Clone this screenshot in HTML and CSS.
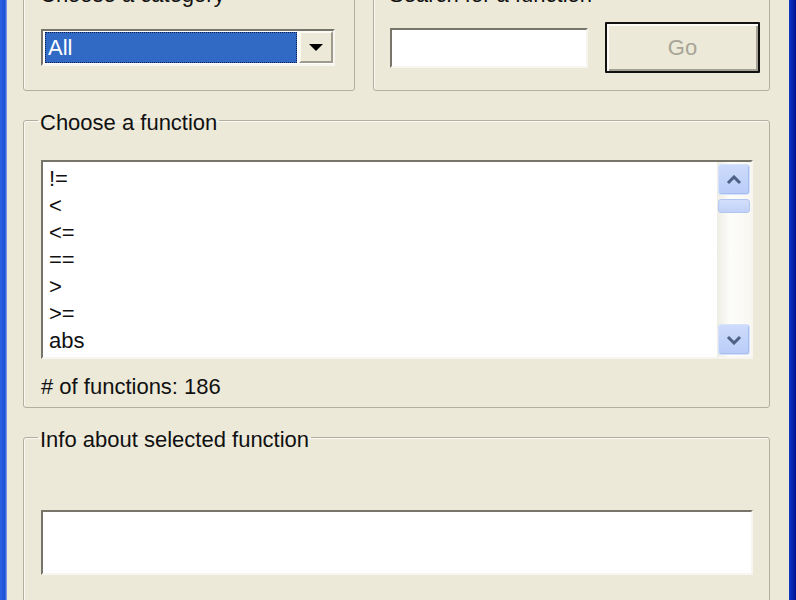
FILE: index.html
```html
<!DOCTYPE html>
<html lang="en">
<head>
    <meta charset="UTF-8">
    <title>Function Browser</title>
    <link rel="stylesheet" href="styles.css">
</head>
<body>
    <div class="window">
        <div class="frame frame-left"></div>
        <div class="client">
            <div class="top-row">
                <fieldset class="group group-category">
                    <legend>Choose a category</legend>
                    <div class="group-row">
                        <div class="combo">
                            <span class="combo-value">All</span>
                            <span class="combo-btn"><span class="tri"></span></span>
                        </div>
                    </div>
                </fieldset>
                <fieldset class="group group-search">
                    <legend>Search for a function</legend>
                    <div class="group-row">
                        <div class="textbox"></div>
                        <button class="btn" disabled>Go</button>
                    </div>
                </fieldset>
            </div>

            <fieldset class="group group-functions">
                <legend>Choose a function</legend>
                <div class="listbox">
                    <ul class="list-items">
                        <li>!=</li>
                        <li>&lt;</li>
                        <li>&lt;=</li>
                        <li>==</li>
                        <li>&gt;</li>
                        <li>&gt;=</li>
                        <li>abs</li>
                    </ul>
                    <div class="scrollbar">
                        <div class="sb-btn">
                            <svg width="16" height="10" viewBox="0 0 16 10"><polyline points="2,8 8,2 14,8" fill="none" stroke="#4d6185" stroke-width="3"/></svg>
                        </div>
                        <div class="sb-thumb"></div>
                        <div class="sb-track"></div>
                        <div class="sb-btn">
                            <svg width="16" height="10" viewBox="0 0 16 10"><polyline points="2,2 8,8 14,2" fill="none" stroke="#4d6185" stroke-width="3"/></svg>
                        </div>
                    </div>
                </div>
                <div class="count"># of functions: 186</div>
            </fieldset>

            <fieldset class="group group-info">
                <legend>Info about selected function</legend>
                <div class="infobox"></div>
            </fieldset>
        </div>
        <div class="frame frame-right"></div>
    </div>
</body>
</html>
```

FILE: styles.css
```css
body {
    margin: 0;
    background-color: #ece9d8;
    font-family: "Liberation Sans", Arial, sans-serif;
    font-size: 22px;
    color: #111;
    overflow: hidden;
}

.window {
    display: flex;
    height: 600px;
}

.frame {
    width: 7px;
    flex-shrink: 0;
}

.frame-left {
    background: linear-gradient(to right, #2b62e2, #1c4fd6 70%, #8fa9e6);
}

.frame-right {
    background: linear-gradient(to right, #1237c8, #0620a8 60%, #001490);
}

.client {
    flex: 1;
    padding: 0 19px 0 16px;
}

/* group boxes */
.group {
    margin: 0;
    border: 1px solid #b2af9f;
    border-radius: 3px;
    box-shadow: inset 1px 1px 0 #f9f8f2;
    padding: 0 16px 0 17px;
    min-width: 0;
}

.group legend {
    font-size: 22px;
    line-height: 24px;
    padding: 6px 2px 0 2px;
    margin-left: -3px;
}

.top-row {
    display: flex;
    gap: 18px;
    margin-top: -23px;
}

.group-category {
    width: 332px;
    box-sizing: border-box;
    padding: 0 19px 0 17px;
}

.group-search {
    flex: 1;
    padding: 0 9px 0 16px;
}

.group-row {
    display: flex;
    align-items: center;
    height: 51px;
    padding: 15px 0 17px;
}

/* combo box */
.combo {
    flex: 1;
    height: 37px;
    box-sizing: border-box;
    display: flex;
    border: 2px solid;
    border-color: #77756a #f6f5ef #f6f5ef #77756a;
    background-color: #fff;
}

.combo-value {
    flex: 1;
    margin: 1px 2px 1px 2px;
    background-color: #316ac5;
    outline: 1px dotted #0c1e44;
    outline-offset: -1px;
    color: #fff;
    line-height: 31px;
    padding-left: 3px;
}

.combo-btn {
    width: 34px;
    height: 32px;
    box-sizing: border-box;
    border: 2px solid;
    border-color: #fbfaf4 #9e9b8c #9e9b8c #fbfaf4;
    background-color: #ece9d8;
    display: flex;
    align-items: center;
    justify-content: center;
}

.tri {
    width: 0;
    height: 0;
    border-left: 7px solid transparent;
    border-right: 7px solid transparent;
    border-top: 7px solid #000;
}

/* search */
.textbox {
    width: 198px;
    height: 40px;
    box-sizing: border-box;
    border: 2px solid;
    border-color: #77756a #f6f5ef #f6f5ef #77756a;
    background-color: #fff;
}

.btn {
    margin-left: 17px;
    width: 155px;
    height: 51px;
    border: 2px solid #111;
    border-radius: 1px;
    background-color: #ece9d8;
    box-shadow: inset 2px 2px 0 #fbfaf4, inset -2px -2px 0 #a5a293;
    font-family: "Liberation Sans", Arial, sans-serif;
    font-size: 22px;
    color: #a8a597;
    padding: 0;
}

/* function list */
.group-functions {
    margin-top: 14px;
    padding: 25px 16px 8px 17px;
}

.listbox {
    height: 199px;
    box-sizing: border-box;
    display: flex;
    border: 2px solid;
    border-color: #77756a #f6f5ef #f6f5ef #77756a;
    background-color: #fff;
}

.list-items {
    flex: 1;
    list-style: none;
    margin: 0;
    padding: 3px 0 0 6px;
    line-height: 27px;
}

.scrollbar {
    width: 34px;
    display: flex;
    flex-direction: column;
    padding: 1px 0 1px 0;
    background: linear-gradient(to right, #eeede5, #fdfdfa 40%, #f8f7f2);
}

.sb-btn {
    height: 29px;
    margin: 1px 1px;
    border: 1px solid #d7e2fa;
    border-radius: 3px;
    background: linear-gradient(#cddbfc, #b9cdf7);
    box-shadow: inset -1px -1px 0 #a6bdee;
    display: flex;
    align-items: center;
    justify-content: center;
}

.sb-thumb {
    height: 12px;
    margin: 3px 1px 0;
    border: 1px solid #b3c6f0;
    border-radius: 3px;
    background: linear-gradient(#d3dffb, #c0d1f8);
}

.sb-track {
    flex: 1;
}

.count {
    margin-top: 16px;
    line-height: 24px;
}

/* info */
.group-info {
    margin-top: 14px;
    padding: 58px 16px 40px 17px;
}

.infobox {
    height: 65px;
    box-sizing: border-box;
    border: 2px solid;
    border-color: #77756a #f6f5ef #f6f5ef #77756a;
    background-color: #fff;
}
```
